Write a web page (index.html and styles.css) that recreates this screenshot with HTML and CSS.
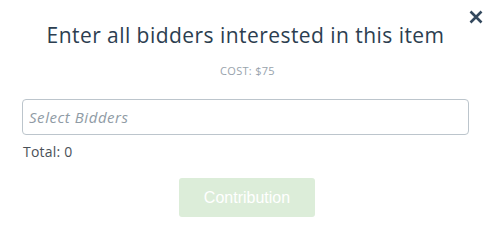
FILE: index.html
```html
<!DOCTYPE html>
<html>
<head>
<meta charset="utf-8">
<link rel="stylesheet" href="styles.css">
</head>
<body>
<div class="modal">
  <button class="close" aria-label="Close">
    <svg width="14" height="14" viewBox="0 0 14 14"><path d="M1.5 1.5 L12.5 12.5 M12.5 1.5 L1.5 12.5" stroke="#34495e" stroke-width="2.6" stroke-linecap="butt"/></svg>
  </button>
  <h2 class="title">Enter all bidders interested in this item</h2>
  <div class="cost">COST: $75</div>
  <div class="field">
    <input class="select" type="text" placeholder="Select Bidders">
  </div>
  <div class="total">Total: 0</div>
  <div class="actions">
    <button class="btn" disabled>Contribution</button>
  </div>
</div>
</body>
</html>
```
FILE: styles.css
```css
html, body {
  margin: 0;
  padding: 0;
  background: #ffffff;
}
body {
  font-family: "Open Sans", "Liberation Sans", sans-serif;
  width: 490px;
  height: 236px;
  overflow: hidden;
}
.modal {
  position: relative;
  padding: 21px 21px 0 22px;
}
.close {
  position: absolute;
  top: 10px;
  right: 7px;
  width: 14px;
  height: 14px;
  padding: 0;
  border: 0;
  background: none;
  display: flex;
}
.title {
  margin: 0;
  font-weight: 400;
  font-size: 21px;
  letter-spacing: 0.45px;
  line-height: 28px;
  color: #2c3e50;
  text-align: center;
}
.cost {
  margin-top: 15px;
  font-size: 11px;
  letter-spacing: 0.3px;
  line-height: 14px;
  color: #98a3ac;
  text-align: center;
  padding-left: 4px;
}
.field {
  margin-top: 21px;
}
.select {
  box-sizing: border-box;
  width: 100%;
  height: 36px;
  border: 1px solid #bcc5cc;
  border-radius: 4px;
  padding: 0 6px;
  font-family: inherit;
  font-size: 15px;
  letter-spacing: 0.55px;
  outline: none;
}
.select::placeholder {
  font-style: italic;
  color: #8f9ba5;
}
.total {
  margin-top: 7px;
  font-size: 14px;
  letter-spacing: 0.2px;
  line-height: 20px;
  color: #4a5158;
  padding-left: 1px;
}
.actions {
  display: flex;
  justify-content: center;
  margin-top: 16px;
  padding-left: 3px;
}
.btn {
  width: 136px;
  height: 39px;
  border: 0;
  border-radius: 3px;
  background: #dcedd9;
  color: #ffffff;
  font-family: "Liberation Sans", sans-serif;
  font-size: 16px;
}
```
